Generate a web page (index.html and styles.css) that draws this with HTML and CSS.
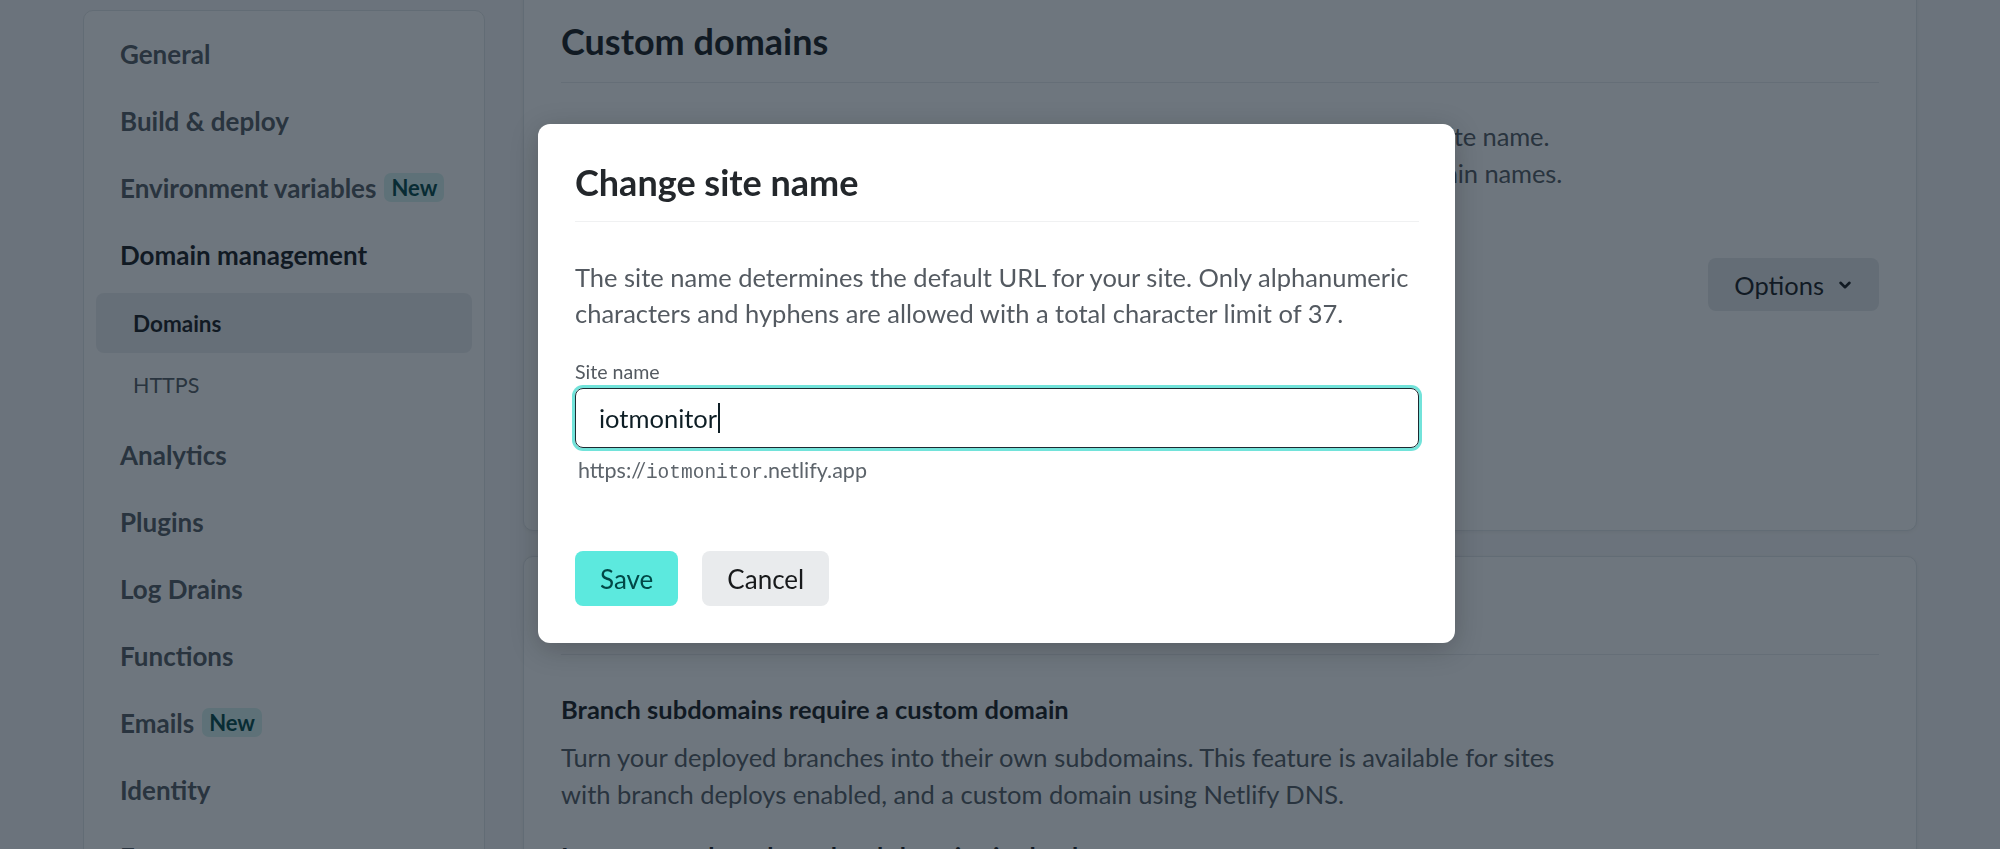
FILE: index.html
```html
<!DOCTYPE html>
<html lang="en">
<head>
<meta charset="utf-8">
<title>Domain management · Site settings</title>
<link rel="stylesheet" href="styles.css">
</head>
<body>
<div class="layout">
  <nav class="sidebar">
    <ul class="nav">
      <li><a class="nav-item">General</a></li>
      <li><a class="nav-item">Build &amp; deploy</a></li>
      <li><a class="nav-item">Environment variables <span class="badge">New</span></a></li>
      <li>
        <a class="nav-item active">Domain management</a>
        <ul class="subnav">
          <li><a class="sub-item current">Domains</a></li>
          <li><a class="sub-item">HTTPS</a></li>
        </ul>
      </li>
      <li><a class="nav-item">Analytics</a></li>
      <li><a class="nav-item">Plugins</a></li>
      <li><a class="nav-item">Log Drains</a></li>
      <li><a class="nav-item">Functions</a></li>
      <li><a class="nav-item">Emails <span class="badge">New</span></a></li>
      <li><a class="nav-item">Identity</a></li>
      <li><a class="nav-item">Forms</a></li>
    </ul>
  </nav>

  <main class="main">
    <section class="card card-domains">
      <header class="card-header">
        <h2 class="card-title">Custom domains</h2>
      </header>
      <div class="card-body">
        <p class="text intro">Your site is always accessible using the Netlify subdomain based on the current site name.<br>Custom domains allow visitors to access your site from one or more of your domain names.</p>
        <div class="domain-row">
          <div class="domain-name">iotmonitor.netlify.app <span class="domain-tag">Default subdomain</span></div>
          <button class="btn-options">Options
            <svg class="chev" width="14" height="14" viewBox="0 0 14 14" aria-hidden="true"><path d="M2.5 4.8 7 9.2l4.5-4.4" fill="none" stroke="currentColor" stroke-width="2.6" stroke-linecap="round" stroke-linejoin="round"/></svg>
          </button>
        </div>
        <div class="add-row"><button class="btn-secondary">Add a domain</button></div>
      </div>
    </section>

    <section class="card card-branch">
      <header class="card-header">
        <h2 class="card-title">Branch subdomains</h2>
      </header>
      <div class="card-body">
        <h3 class="sub-title">Branch subdomains require a custom domain</h3>
        <p class="text text-branch">Turn your deployed branches into their own subdomains. This feature is available for sites<br>with branch deploys enabled, and a custom domain using Netlify DNS.</p>
        <p class="sub-title learn">Learn more about branch subdomains in the docs
          <svg width="18" height="18" viewBox="0 0 18 18" aria-hidden="true"><path d="M6 4h8v8M14 4 4 14" fill="none" stroke="currentColor" stroke-width="2"/></svg>
        </p>
      </div>
    </section>
  </main>
</div>

<div class="overlay"></div>

<div class="modal" role="dialog" aria-labelledby="modal-title">
  <h2 class="modal-title" id="modal-title">Change site name</h2>
  <p class="modal-text">The site name determines the default URL for your site. Only alphanumeric characters and hyphens are allowed with a total character limit of 37.</p>
  <label class="field-label">Site name</label>
  <div class="field-input" role="textbox">iotmonitor<span class="caret"></span></div>
  <div class="field-help">https://<span class="mono">iotmonitor</span>.netlify.app</div>
  <div class="modal-actions">
    <button class="btn btn-primary">Save</button>
    <button class="btn btn-cancel">Cancel</button>
  </div>
</div>
</body>
</html>
```

FILE: styles.css
```css
* { box-sizing: border-box; }

html, body {
  margin: 0;
  height: 100%;
}

body {
  background: #f8f8f9;
  font-family: Lato, "Liberation Sans", sans-serif;
  color: #181a1c;
  overflow: hidden;
}

ul { list-style: none; margin: 0; padding: 0; }

button {
  font-family: inherit;
  border: 0;
  cursor: pointer;
}

.layout {
  display: flex;
  align-items: flex-start;
  gap: 38px;
  padding: 10px 83px 0;
}

/* Sidebar */
.sidebar {
  flex: none;
  width: 402px;
  height: 1000px;
  background: #fff;
  border: 1px solid #e2e5e8;
  border-radius: 10px;
  padding: 9px 12px 0;
}

.nav-item {
  display: flex;
  align-items: center;
  gap: 8px;
  height: 67px;
  padding-left: 24px;
  font-size: 26px;
  font-weight: 700;
  color: #545a61;
}

.nav-item.active { color: #181a1c; }

.badge {
  font-size: 22px;
  font-weight: 700;
  line-height: 29px;
  padding: 0 7px;
  border-radius: 7px;
  background: #d6f3ef;
  color: #014847;
}

.subnav {
  display: flex;
  flex-direction: column;
  gap: 2px;
  padding: 5px 0 6px;
}

.sub-item {
  display: flex;
  align-items: center;
  height: 60px;
  padding-left: 37px;
  font-size: 21.5px;
  color: #545a61;
  border-radius: 8px;
}

.sub-item.current {
  background: #eceef0;
  font-weight: 700;
  font-size: 22.5px;
  color: #181a1c;
}

/* Main column */
.main {
  flex: 1;
  display: flex;
  flex-direction: column;
  gap: 25px;
  margin-top: -26px;
}

.card {
  background: #fff;
  border: 1px solid #e2e5e8;
  border-radius: 10px;
  padding: 0 37px;
  box-shadow: 0 1px 4px rgba(0, 0, 0, 0.06);
}

.card-header {
  padding: 36px 0 20px;
  border-bottom: 1px solid #e9ebed;
}

.card-title {
  margin: 0;
  font-size: 36px;
  line-height: 41px;
  font-weight: 700;
  color: #181a1c;
}

.text {
  margin: 0;
  font-size: 25.5px;
  line-height: 37px;
  color: #545a61;
}

.intro { letter-spacing: -0.11px; }

.card-domains .card-body { padding: 35px 0 126px; }

.domain-row {
  display: flex;
  align-items: center;
  justify-content: space-between;
  margin-top: 66px;
}

.domain-name {
  font-size: 25.5px;
  font-weight: 700;
}

.domain-tag {
  font-weight: 400;
  color: #545a61;
  font-size: 21px;
}

.btn-options {
  display: flex;
  align-items: center;
  gap: 14px;
  height: 53px;
  padding: 0 27px 0 26px;
  font-size: 25.5px;
  color: #181a1c;
  background: #e6e9eb;
  border-radius: 8px;
}

.add-row { margin-top: 40px; }

.btn-secondary {
  height: 53px;
  padding: 0 26px;
  font-size: 25.5px;
  background: #e9ebed;
  border-radius: 8px;
  color: #181a1c;
}

.card-branch .card-body { padding: 36px 0 40px; }

.sub-title {
  margin: 0;
  font-size: 25.5px;
  line-height: 36px;
  font-weight: 700;
  color: #181a1c;
}

.text-branch { margin-top: 12px; }

.learn {
  margin-top: 25px;
  display: flex;
  align-items: center;
  gap: 8px;
}

/* Overlay + modal */
.overlay {
  position: fixed;
  inset: 0;
  background: rgba(14, 27, 40, 0.6);
}

.modal {
  position: fixed;
  left: 538px;
  top: 124px;
  width: 917px;
  background: #fff;
  border-radius: 12px;
  padding: 38px 36px 37px 37px;
  box-shadow: 0 6px 28px rgba(0, 0, 0, 0.22);
}

.modal-title {
  margin: 0;
  padding-bottom: 18px;
  border-bottom: 1px solid #f0f1f2;
  font-size: 36px;
  line-height: 41px;
  font-weight: 700;
  color: #23272b;
}

.modal-text {
  margin: 37px 0 0;
  font-size: 25.5px;
  line-height: 36px;
  color: #545a61;
}

.field-label {
  display: block;
  margin-top: 29px;
  font-size: 19.6px;
  line-height: 24px;
  color: #545a61;
}

.field-input {
  display: flex;
  align-items: center;
  margin-top: 4px;
  height: 60px;
  padding-left: 23px;
  border: 1px solid #1d2a31;
  border-radius: 8px;
  box-shadow: 0 0 0 3px #72e3da;
  font-size: 25.5px;
  color: #0e1e25;
}

.caret {
  display: inline-block;
  width: 2px;
  height: 30px;
  margin-left: 1px;
  background: #0e1e25;
}

.field-help {
  margin-top: 8px;
  padding-left: 3px;
  font-size: 21.5px;
  line-height: 28px;
  color: #5d646b;
}

.mono {
  font-family: "Liberation Mono", monospace;
  font-size: 19.5px;
}

.modal-actions {
  display: flex;
  gap: 24px;
  margin-top: 64px;
}

.btn {
  height: 55px;
  padding: 0 25px;
  font-size: 26px;
  border-radius: 8px;
}

.btn-primary {
  background: #5ce9de;
  color: #014847;
}

.btn-cancel {
  background: #e9ebed;
  color: #181a1c;
}
```
